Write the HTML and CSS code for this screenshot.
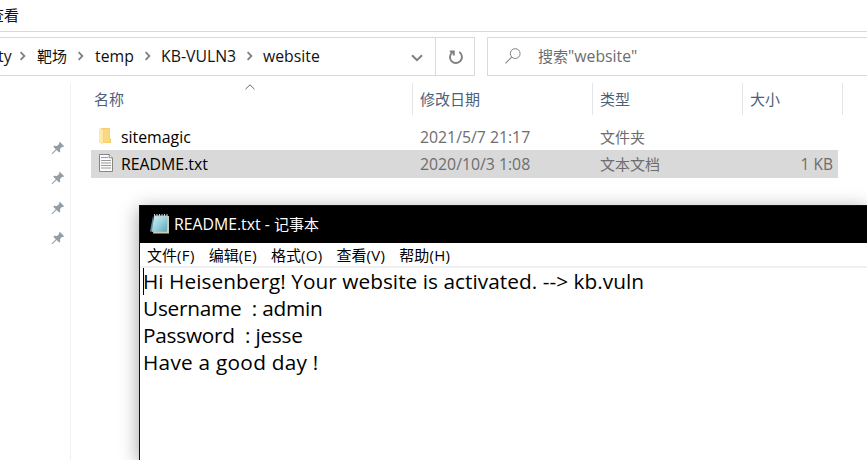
FILE: index.html
```html
<!DOCTYPE html>
<html lang="zh-CN">
<head>
<meta charset="utf-8">
<title>website</title>
<link rel="stylesheet" href="styles.css">
</head>
<body>
<svg class="defs" width="0" height="0">
  <symbol id="chev" viewBox="0 0 8 10"><path d="M1.6 1.2 5.4 5 1.6 8.8" fill="none" stroke="#808080" stroke-width="1.8"/></symbol>
  <symbol id="pin" viewBox="0 0 14 14"><path d="M8.8.8 13.2 5.2 12 5.9 11.2 5.7 9 8 9.2 10.8 8.2 11.6 5.6 9 1.2 13.2.6 12.6 4.8 8.2 2.3 5.7 3.2 4.8 6 5 8.3 2.8 8.1 1.8Z" fill="#939da6"/></symbol>
</svg>
<div class="explorer">
  <div class="tabs"><span>查看</span></div>
  <div class="nav">
    <div class="address">
      <span class="crumb c-ty">ty</span><svg class="sep"><use href="#chev"/></svg>
      <span class="crumb c-range">靶场</span><svg class="sep"><use href="#chev"/></svg>
      <span class="crumb c-temp">temp</span><svg class="sep"><use href="#chev"/></svg>
      <span class="crumb c-kb">KB-VULN3</span><svg class="sep"><use href="#chev"/></svg>
      <span class="crumb c-web">website</span>
      <svg class="drop" viewBox="0 0 12 8"><path d="M1 1.2 6 6.2 11 1.2" fill="none" stroke="#808080" stroke-width="2"/></svg>
    </div>
    <div class="refresh"><svg width="16" height="16" viewBox="0 0 16 16"><path d="M4.6 3.1A6 6 0 1 0 11.2 3M1.8 2.4H5.8V6.6" fill="none" stroke="#808080" stroke-width="1.9"/></svg></div>
    <div class="search"><svg width="16" height="16" viewBox="0 0 16 16"><circle cx="10.2" cy="5.6" r="4.9" fill="none" stroke="#848488"/><path d="M6.7 9.1.5 15.3" stroke="#848488" stroke-width="1.1"/></svg><span>搜索<b>"website"</b></span></div>
  </div>
  <div class="main">
    <div class="side">
      <svg><use href="#pin"/></svg><svg><use href="#pin"/></svg><svg><use href="#pin"/></svg><svg><use href="#pin"/></svg>
    </div>
    <div class="files">
      <div class="head">
        <div class="h-name">名称<svg class="sort" viewBox="0 0 10 6"><path d="M.5 5.2 5 .8 9.5 5.2" fill="none" stroke="#666"/></svg></div>
        <div class="h-date">修改日期</div>
        <div class="h-type">类型</div>
        <div class="h-size">大小</div>
      </div>
      <div class="row">
        <svg class="ico folder" viewBox="0 0 16 18"><path d="M3 0H12V10L13 11V15H3Z" fill="#f3cf72"/><path d="M5.5 1H11.5V14H5.5Z" fill="#f8d980"/><path d="M1 0 5 1.8V17L1 14.8Z" fill="#ffe9a9"/></svg>
        <span class="name">sitemagic</span><span class="date">2021/5/7 21:17</span><span class="type">文件夹</span><span class="size"></span>
      </div>
      <div class="row selected">
        <svg class="ico" viewBox="0 0 16 18"><path d="M1.5.5H11.2L14.5 3.8V17.5H1.5Z" fill="#fbfbfb" stroke="#858585"/><path d="M11.2.5V3.8H14.5" fill="#fff" stroke="#858585"/><path d="M3 3.5H10M3 6.5H13M3 9H13M3 11.5H13M3 14H13" stroke="#9a9a9a"/></svg>
        <span class="name">README.txt</span><span class="date">2020/10/3 1:08</span><span class="type">文本文档</span><span class="size">1 KB</span>
      </div>
    </div>
  </div>
</div>
<div class="notepad">
  <div class="title">
    <svg width="20" height="22" viewBox="0 0 20 22"><defs><linearGradient id="pad" x1="0" y1="0" x2="1" y2="1"><stop offset="0" stop-color="#d0eff4"/><stop offset=".5" stop-color="#9bd2dd"/><stop offset="1" stop-color="#58a5b6"/></linearGradient></defs><path d="M5 3H19V20.5H3Z" fill="#d3cbb0"/><path d="M3 3 0 18.5 4 19Z" fill="#5b8f9a"/><path d="M4 2.5H17.5L16.8 18.8H2Z" fill="url(#pad)"/><path d="M4.5 1V4M7 1V4M9.5 1V4M12 1V4M14.5 1V4M17 1V4" stroke="#c4cccd"/></svg>
    <span class="t-name">README.txt - </span><span class="t-app">记事本</span>
  </div>
  <div class="menu"><span>文件<i>(F)</i></span><span>编辑<i>(E)</i></span><span>格式<i>(O)</i></span><span>查看<i>(V)</i></span><span>帮助<i>(H)</i></span></div>
  <div class="text"><div class="caret"></div><div class="l1">Hi Heisenberg! Your website is activated. --&gt; kb.vuln</div><div class="l2">Username  : admin</div><div class="l3">Password  : jesse</div><div class="l4">Have a good day !</div></div>
</div>
</body>
</html>
```
FILE: styles.css
```css
* { box-sizing: border-box; }
html, body { margin: 0; width: 867px; height: 460px; overflow: hidden; background: #fff; }
body { position: relative; font: 15px/20px "Open Sans", "Noto Sans CJK SC", sans-serif; color: #111; white-space: nowrap; }
svg { display: block; flex: none; }
.defs { position: absolute; }
.explorer { width: 867px; height: 460px; display: flex; flex-direction: column; }
.tabs { height: 32px; border-bottom: 1px solid #d9d9d9; padding-top: 5px; }
.tabs span { display: block; margin-left: -11px; }
.nav { height: 51px; padding: 5px 0 7px; display: flex; }
.address { flex: none; width: 436px; height: 39px; border: 1px solid #d9d9d9; border-left: 0; display: flex; align-items: center; padding-bottom: 1px; }
.crumb { flex: none; font-size: 15.8px; }
.sep { width: 8px; height: 10px; margin: 0 9px 1px 9px; }
.c-ty { width: 12px; margin-left: -2px; }
.c-range { width: 31px; font-size: 15px; margin-left: 1px; }
.c-temp { width: 40px; margin-left: 1px; }
.c-kb { width: 76px; }
.c-web { width: 148px; }
.drop { width: 12px; height: 8px; margin-top: 3px; }
.refresh { flex: none; width: 39px; height: 39px; border: 1px solid #d9d9d9; border-left: 0; display: flex; align-items: center; justify-content: center; padding-left: 2px; }
.search { flex: none; margin-left: 12px; width: 380px; height: 39px; border: 1px solid #d9d9d9; border-right: 0; display: flex; align-items: center; padding: 0 0 1px 17px; gap: 17px; color: #6d6d6d; }
.search b { font-weight: 400; font-size: 15.8px; }
.main { height: 377px; display: flex; }
.side { width: 71px; border-right: 1px solid #f1f1f1; padding: 58px 0 0 51px; display: flex; flex-direction: column; gap: 16px; }
.side svg { width: 14px; height: 14px; }
.files { width: 772px; }
.head { display: flex; height: 32px; margin-bottom: 8px; color: #4c607a; line-height: 33px; }
.head div { border-right: 1px solid #e5e5e5; padding-left: 7px; }
.head .h-name { width: 342px; padding-left: 23px; position: relative; }
.h-date { width: 180px; }
.h-type { width: 150px; }
.h-size { width: 100px; }
.sort { position: absolute; left: 174px; top: 1px; width: 10px; height: 6px; }
.row { margin-left: 20px; width: 747px; height: 27px; display: flex; align-items: center; padding: 0 5px 0 7px; color: #6d6d6d; }
.selected { height: 28px; background: #d9d9d9; }
.ico { width: 16px; height: 18px; margin: -2px 7px 0 0; }
.folder { margin-top: 0; }
.name { width: 299px; color: #000; font-size: 15.85px; }
.date { width: 180px; font-size: 15.8px; }
.type { width: 150px; }
.size { flex: 1; text-align: right; font-size: 15.5px; }
.notepad { position: absolute; left: 139px; top: 205px; width: 728px; height: 255px; border: solid #0c1414; border-width: 1px 0 0 1px; background: #fff; box-shadow: 0 4px 18px rgba(0,0,0,.38); color: #000; }
.title { height: 37px; background: #000; color: #fff; display: flex; align-items: center; padding: 0 0 2px 10px; }
.t-name { white-space: pre; margin-left: 4px; font-size: 15.8px; }
.menu { height: 25px; display: flex; padding: 2px 0 0 7px; gap: 14px; border-bottom: 2px solid #f0f0f0; }
.menu i { font-style: normal; letter-spacing: .35px; }
.text { position: relative; padding: 0 0 0 3px; font-size: 20.8px; line-height: 27px; white-space: pre; }
.l1 { letter-spacing: .04px; }
.l2 { letter-spacing: -.25px; }
.l3 { letter-spacing: -.25px; }
.l4 { letter-spacing: .25px; }
.caret { position: absolute; left: 3px; top: 0; width: 1px; height: 27px; background: #000; }
```
